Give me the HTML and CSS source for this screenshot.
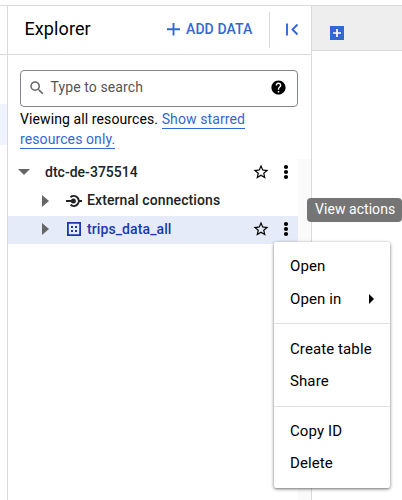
FILE: index.html
```
<!DOCTYPE html>
<html lang="en">
<head>
<meta charset="utf-8">
<title>Explorer</title>
<link rel="stylesheet" href="styles.css">
</head>
<body>
<svg class="defs" width="0" height="0">
  <symbol id="star" viewBox="0 0 24 24"><path d="M22 9.24l-7.19-.62L12 2 9.19 8.63 2 9.24l5.46 4.73L5.82 21 12 17.27 18.18 21l-1.63-7.03L22 9.24zM12 15.4l-3.76 2.27 1-4.28-3.32-2.88 4.38-.38L12 6.1l1.71 4.04 4.38.38-3.32 2.88 1 4.28L12 15.4z"/></symbol>
  <symbol id="dots" viewBox="0 0 6 16"><circle cx="3" cy="3" r="2.100"/><circle cx="3" cy="8" r="2.100"/><circle cx="3" cy="13" r="2.100"/></symbol>
</svg>
<div class="app">
  <nav class="rail"><div class="rail-head"></div><div class="rail-active"></div></nav>
  <section class="explorer">
    <header class="head">
      <h1 class="title">Explorer</h1>
      <button class="add"><svg width="13" height="13" viewBox="0 0 13 13"><path d="M6.5 0v12.500M0 6.250h13" stroke="currentColor" stroke-width="1.900"/></svg><span>ADD DATA</span></button>
      <div class="divider"></div>
      <svg class="collapse" width="13" height="13" viewBox="0 0 13 13"><path d="M1 .5v12M11.500 1.500L6.500 6.500l5 5" fill="none" stroke="currentColor" stroke-width="1.900"/></svg>
    </header>
    <div class="search">
      <svg class="lens" width="18" height="18" viewBox="0 0 24 24"><path d="M15.500 14h-.79l-.28-.27A6.470 6.470 0 0 0 16 9.500 6.500 6.500 0 1 0 9.500 16c1.610 0 3.090-.59 4.230-1.570l.27.28v.79l5 4.990L20.490 19l-4.990-5zm-6 0C7.010 14 5 11.990 5 9.500S7.010 5 9.500 5 14 7.010 14 9.500 11.990 14 9.500 14z"/></svg>
      <span class="placeholder">Type to search</span>
      <svg class="help" width="17" height="17" viewBox="0 0 24 24"><path d="M12 2C6.480 2 2 6.480 2 12s4.480 10 10 10 10-4.480 10-10S17.520 2 12 2zm1 17h-2v-2h2v2zm2.070-7.750l-.9.920C13.450 12.900 13 13.500 13 15h-2v-.5c0-1.100.45-2.100 1.170-2.830l1.240-1.260c.37-.36.590-.86.590-1.410 0-1.100-.9-2-2-2s-2 .9-2 2H8c0-2.210 1.790-4 4-4s4 1.790 4 4c0 .88-.36 1.680-.93 2.250z"/></svg>
    </div>
    <p class="note">Viewing all resources. <a>Show starred<br>resources only.</a></p>
    <div class="results">
      <div class="tree">
        <div class="row project"><svg class="down" width="12" height="6"><path d="M0 0h12L6 6z"/></svg><span class="label">dtc-de-375514</span><svg class="star" width="18" height="18"><use href="#star"/></svg><svg class="dots" width="6" height="16"><use href="#dots"/></svg></div>
        <div class="row child"><svg class="right" width="7" height="12"><path d="M0 0v12l7-6z"/></svg><svg class="kind" width="16" height="14" viewBox="0 0 16 14" fill="none" stroke="#202124" stroke-width="2"><path d="M0 7h6M13 7h3M4.500 3.200A5 5 0 1 1 4.500 10.800"/><circle cx="7.400" cy="7" r="2.500" fill="#202124" stroke="none"/></svg><span class="label">External connections</span></div>
        <div class="row child selected"><svg class="right" width="7" height="12"><path d="M0 0v12l7-6z"/></svg><svg class="kind" width="16" height="14" viewBox="0 0 16 14"><path d="M1.900.9h12.200v12.200H1.900z" fill="none" stroke="#1a39b0" stroke-width="1.800"/><path d="M5 4h2v2H5zM9 4h2v2H9zM5 8h2v2H5zM9 8h2v2H9z" fill="#1a39b0"/></svg><span class="label">trips_data_all</span><svg class="star" width="18" height="18"><use href="#star"/></svg><svg class="dots" width="6" height="16"><use href="#dots"/></svg></div>
      </div>
      <div class="track"></div>
    </div>
  </section>
  <main class="work"><div class="tabs"><svg width="14" height="14" viewBox="0 0 14 14"><path d="M0 0h14v14H0z" fill="#3367d6"/><path d="M7 3v8M3 7h8" stroke="#fff" stroke-width="1.700"/></svg></div></main>
</div>
<div class="tooltip">View actions</div>
<div class="menu">
  <div class="group first"><div class="item">Open</div><div class="item">Open in<svg width="5" height="10"><path d="M0 0v10l5-5z"/></svg></div></div>
  <div class="group"><div class="item">Create table</div><div class="item">Share</div></div>
  <div class="group last"><div class="item">Copy ID</div><div class="item">Delete</div></div>
</div>
</body>
</html>
```
FILE: styles.css
```
* { box-sizing: border-box; }
body { margin: 0; height: 500px; overflow: hidden; position: relative; background: #fff; color: #000; font: 14px/20px Roboto, sans-serif; }
svg { display: block; flex: none; }
.defs { position: absolute; }
.app { display: flex; height: 500px; padding-top: 5px; }
.rail { width: 8px; border-top: 1px solid #dadada; border-right: 1px solid #dadada; }
.rail-head { height: 49px; border-bottom: 1px solid #dadada; }
.rail-active { height: 41px; margin-top: 49px; background: #eef3fd; }
.explorer { width: 304px; display: flex; flex-direction: column; border-top: 1px solid #dadada; border-right: 1px solid #dadada; }
.head { height: 49px; flex: none; display: flex; align-items: center; border-bottom: 1px solid #dadada; padding-left: 16.5px; }
.title { margin: 0; width: 142.500px; font-size: 18px; font-weight: 400; line-height: 24px; letter-spacing: .1px; position: relative; top: -1px; }
.add { display: flex; align-items: center; gap: 6px; width: 102px; padding: 0 0 2px; border: 0; background: none; color: #3367d6; font: 500 14px/20px Roboto, sans-serif; letter-spacing: .1px; white-space: nowrap; }
.divider { width: 1px; height: 36px; background: #dadada; }
.collapse { margin: 0 0 2px 16px; color: #3367d6; }
.search { height: 37px; flex: none; margin: 15px 13px 0 12px; border: 1px solid #80868b; border-radius: 4px; display: flex; align-items: center; padding: 0 10.5px 2px 7px; }
.lens { fill: #666; }
.placeholder { flex: 1; margin: 0 0 2px 4.5px; color: #555; letter-spacing: .1px; }
.note { margin: 2px 0 0 12px; line-height: 20px; letter-spacing: .1px; white-space: nowrap; }
.note a { color: #3367d6; padding-bottom: 1px; border-bottom: 1px solid #3367d6; }
.results { flex: 1; display: flex; margin-top: 10px; }
.tree { width: 290px; }
.track { flex: 1; background: #fafafa; }
.row { height: 28px; display: flex; align-items: center; padding-right: 9px; font-weight: 500; color: #202124; letter-spacing: .1px; }
.project { padding-left: 10px; height: 26px; letter-spacing: .02px; }
.child { padding-left: 34px; }
.child:nth-child(2) { height: 31px; }
.label { flex: 1; padding-bottom: 1px; }
.project .label { margin-left: 15px; }
.down, .right { fill: #666; }
.kind { width: 16px; margin: 0 5px 0 17px; }
.selected { background: #e6ebf9; color: #1a39b0; padding-bottom: 2px; }
.star { margin-right: 13px; fill: #000; }
.dots { fill: #000; }
.work { flex: 1; border-top: 1px solid #dadada; }
.tabs { height: 45px; background: #eee; border-bottom: 1px solid #dadada; padding: 20px 0 0 18px; }
.tooltip { position: absolute; left: 307px; top: 198px; width: 95px; height: 24px; padding-left: 8px; background: #757575; color: #fff; border-radius: 4px; line-height: 23px; letter-spacing: .05px; white-space: nowrap; }
.menu { position: absolute; left: 274px; top: 242px; width: 116px; height: 246px; background: #fff; border-radius: 2px; box-shadow: 0 1px 3px rgba(0,0,0,.5), 0 1px 5px rgba(0,0,0,.12); font-size: 15px; letter-spacing: .1px; }
.group { height: 83px; padding: 9px 16px; border-top: 1px solid #e0e0e0; }
.group.first { height: 81px; padding-top: 8px; border: 0; }
.group.last { padding-top: 8px; }
.item { height: 32px; display: flex; align-items: center; justify-content: space-between; white-space: nowrap; }
.first .item:last-child { height: 34px; }
```
